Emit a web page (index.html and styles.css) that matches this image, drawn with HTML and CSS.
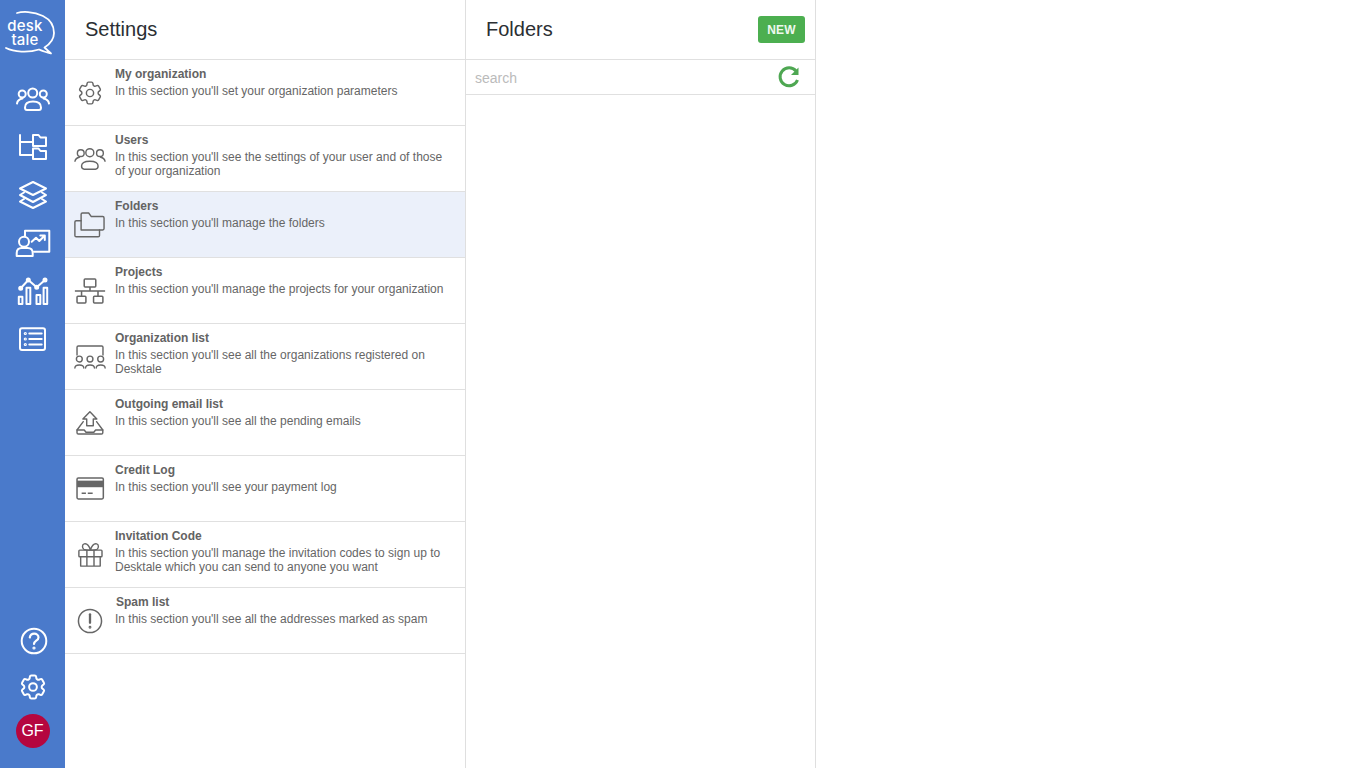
FILE: index.html
```html
<!DOCTYPE html>
<html lang="en">
<head>
<meta charset="utf-8">
<title>Settings</title>
<link rel="stylesheet" href="styles.css">
</head>
<body>
<div class="app">
  <nav class="sidebar">
    <div class="logo">
      <svg class="logo-bubble" width="65" height="60" viewBox="0 0 65 60" fill="none" stroke="#fff" stroke-width="1.800" stroke-linecap="round" stroke-linejoin="round"><path d="M17 13C22 11.500 33 11 43 16C51 20 54 27 54 33C54 39 50 44 44.500 47.500L51 53.500C46 52 42 51 39 49.500C28 53 14 52 6 48"/></svg>
      <span class="logo-text">desk<br>tale</span>
    </div>
    <div class="nav-top">
      <svg class="nav-icon" width="36" height="36" viewBox="0 0 36 36" fill="none" stroke="#fff" stroke-width="2" stroke-linecap="round" stroke-linejoin="round"><circle cx="17.700" cy="13" r="4.500"/><circle cx="7.200" cy="14" r="3.500"/><circle cx="28.300" cy="14" r="3.500"/><path d="M10 27.500c0-4 3-6 8-6s8 2 8 6c0 1.500-.7 2.500-2 2.500H12c-1.300 0-2-1-2-2.500z"/><path d="M2 23.500c.5-3 2.500-4.500 5.500-5M34 23.500c-.5-3-2.500-4.500-5.500-5"/></svg>
      <svg class="nav-icon" width="36" height="36" viewBox="0 0 36 36" fill="none" stroke="#fff" stroke-width="2" stroke-linecap="round" stroke-linejoin="round"><path d="M5 7v20h13M5 14h13"/><path d="M18 18V7h5.500l2 2.500H31V18z"/><path d="M18 31V20.500h5.500l2 2.500H31V31z"/></svg>
      <svg class="nav-icon" width="36" height="36" viewBox="0 0 36 36" fill="none" stroke="#fff" stroke-width="2" stroke-linecap="round" stroke-linejoin="round"><path d="M18 6 31 12.500 18 19 5 12.500z"/><path d="M9 16.500 5 19 18 26 31 19 27 16.500"/><path d="M9 23 5 25.500 18 32 31 25.500 27 23"/></svg>
      <svg class="nav-icon" width="36" height="36" viewBox="0 0 36 36" fill="none" stroke="#fff" stroke-width="2" stroke-linecap="round" stroke-linejoin="round"><path d="M10 12V6.700h24.300v21H19"/><circle cx="9" cy="17.700" r="5"/><path d="M1.700 32v-3c0-3 2-5 5-5h6c3 0 5 2 5 5v3z"/><path d="M16.700 17.700 21 13.700 24.300 17 29.300 12M25.300 11.500h4.500V16"/></svg>
      <svg class="nav-icon" width="36" height="36" viewBox="0 0 36 36" fill="none" stroke="#fff" stroke-width="2" stroke-linecap="round" stroke-linejoin="round"><rect x="3.800" y="24.700" width="3.600" height="7.300"/><rect x="11.500" y="15.700" width="3.800" height="16.300"/><rect x="21.500" y="23" width="3.800" height="9"/><rect x="28.600" y="15.700" width="3.600" height="16.300"/><path d="M5.700 16.300 13.300 8 21.700 15.300 30 8"/><circle cx="5.700" cy="16.300" r="1.500"/><circle cx="13.300" cy="8" r="1.500"/><circle cx="21.700" cy="15.300" r="1.500"/><circle cx="30" cy="8" r="1.500"/></svg>
      <svg class="nav-icon" width="36" height="36" viewBox="0 0 36 36" fill="none" stroke="#fff" stroke-width="2" stroke-linecap="round" stroke-linejoin="round"><rect x="5" y="8.300" width="25" height="21.700" rx="2"/><path d="M14.300 13.500h12.400M14.300 19h12.400M14.300 24.500h12.400"/><circle cx="10.300" cy="13.500" r=".6"/><circle cx="10.300" cy="19" r=".6"/><circle cx="10.300" cy="24.500" r=".6"/></svg>
    </div>
    <div class="nav-bottom">
      <svg class="help-icon" width="36" height="36" viewBox="0 0 36 36" fill="none" stroke="#fff" stroke-width="2" stroke-linecap="round" stroke-linejoin="round"><circle cx="18" cy="18" r="12.300"/><path d="M13.800 14.500c.4-2.500 2.200-3.800 4.400-3.800 2.500 0 4.300 1.600 4.300 3.700 0 3.300-4.500 3.300-4.500 6.600" stroke-width="2.200"/><circle cx="18" cy="25" r=".6"/></svg>
      <svg class="gear-icon" width="36" height="36" viewBox="-1.950 -1.950 27.900 27.900" fill="none" stroke="#fff" stroke-width="1.550" stroke-linecap="round" stroke-linejoin="round"><path d="M9.594 3.940c.09-.542.56-.94 1.110-.94h2.593c.55 0 1.020.398 1.110.94l.213 1.281c.063.374.313.686.645.87.074.04.147.083.22.127.325.196.72.257 1.075.124l1.217-.456a1.125 1.125 0 011.370.49l1.296 2.247a1.125 1.125 0 01-.26 1.431l-1.003.827c-.293.241-.438.613-.43.992a7.723 7.723 0 010 .255c-.008.378.137.75.43.991l1.004.827c.424.35.534.955.26 1.430l-1.298 2.247a1.125 1.125 0 01-1.369.491l-1.217-.456c-.355-.133-.75-.072-1.076.124a6.570 6.570 0 01-.22.128c-.331.183-.581.495-.644.869l-.213 1.280c-.09.543-.56.941-1.110.941h-2.594c-.55 0-1.020-.398-1.110-.94l-.213-1.281c-.062-.374-.312-.686-.644-.87a6.520 6.520 0 01-.22-.127c-.325-.196-.72-.257-1.076-.124l-1.217.456a1.125 1.125 0 01-1.369-.49l-1.297-2.247a1.125 1.125 0 01.26-1.431l1.004-.827c.292-.24.437-.613.43-.992a6.932 6.932 0 010-.255c.007-.378-.138-.75-.43-.992l-1.004-.827a1.125 1.125 0 01-.26-1.430l1.297-2.247a1.125 1.125 0 011.370-.491l1.216.456c.356.133.751.072 1.076-.124.072-.044.146-.087.22-.128.332-.183.582-.495.644-.869l.214-1.281z"/><circle cx="12" cy="12" r="3"/></svg>
      <div class="avatar">GF</div>
    </div>
  </nav>

  <section class="settings">
    <header class="col-head"><h1>Settings</h1></header>
    <ul class="menu">
      <li class="row">
        <svg class="row-icon" width="32" height="32" viewBox="-1.250 -1.250 26.500 26.500" fill="none" stroke="#666" stroke-width="1.200" stroke-linecap="round" stroke-linejoin="round"><path d="M9.594 3.940c.09-.542.56-.94 1.110-.94h2.593c.55 0 1.020.398 1.110.94l.213 1.281c.063.374.313.686.645.87.074.04.147.083.22.127.325.196.72.257 1.075.124l1.217-.456a1.125 1.125 0 011.370.49l1.296 2.247a1.125 1.125 0 01-.26 1.431l-1.003.827c-.293.241-.438.613-.43.992a7.723 7.723 0 010 .255c-.008.378.137.75.43.991l1.004.827c.424.35.534.955.26 1.430l-1.298 2.247a1.125 1.125 0 01-1.369.491l-1.217-.456c-.355-.133-.75-.072-1.076.124a6.570 6.570 0 01-.22.128c-.331.183-.581.495-.644.869l-.213 1.280c-.09.543-.56.941-1.110.941h-2.594c-.55 0-1.020-.398-1.110-.94l-.213-1.281c-.062-.374-.312-.686-.644-.87a6.520 6.520 0 01-.22-.127c-.325-.196-.72-.257-1.076-.124l-1.217.456a1.125 1.125 0 01-1.369-.49l-1.297-2.247a1.125 1.125 0 01.26-1.431l1.004-.827c.292-.24.437-.613.43-.992a6.932 6.932 0 010-.255c.007-.378-.138-.75-.43-.992l-1.004-.827a1.125 1.125 0 01-.26-1.430l1.297-2.247a1.125 1.125 0 011.370-.491l1.216.456c.356.133.751.072 1.076-.124.072-.044.146-.087.22-.128.332-.183.582-.495.644-.869l.214-1.281z"/><circle cx="12" cy="12" r="3"/></svg>
        <div class="row-text"><h2>My organization</h2><p>In this section you'll set your organization parameters</p></div>
      </li>
      <li class="row">
        <svg class="row-icon" width="32" height="32" viewBox="0 0 36 36" fill="none" stroke="#666" stroke-width="1.600" stroke-linecap="round" stroke-linejoin="round"><circle cx="17.800" cy="10.900" r="4.500"/><circle cx="7.600" cy="11.400" r="3.800"/><circle cx="29.200" cy="11.400" r="3.800"/><path d="M8.500 26c0-3.500 3-5.500 9.300-5.500s9.300 2 9.300 5.500c0 2-1 3.500-3 3.500H11.500c-2 0-3-1.500-3-3.500z"/><path d="M1.100 20.500c.5-2.500 2-4 5-4.500M34.900 20.500c-.5-2.500-2-4-5-4.500"/></svg>
        <div class="row-text"><h2>Users</h2><p>In this section you'll see the settings of your user and of those of your organization</p></div>
      </li>
      <li class="row active">
        <svg class="row-icon" width="32" height="32" viewBox="0 0 36 36" fill="none" stroke="#666" stroke-width="1.600" stroke-linecap="round" stroke-linejoin="round"><path d="M8 23.600V6c0-1 .5-1.500 1.500-1.500h7l3 4h12.800c1 0 1.500.5 1.500 1.500v12c0 1-.5 1.600-1.500 1.600z"/><path d="M8 13.200H2.500c-1 0-1.500.5-1.500 1.500v15c0 1 .5 1.500 1.500 1.500h24.700c1 0 1.500-.5 1.500-1.500v-6.100"/></svg>
        <div class="row-text"><h2>Folders</h2><p>In this section you'll manage the folders</p></div>
      </li>
      <li class="row">
        <svg class="row-icon" width="32" height="32" viewBox="0 0 36 36" fill="none" stroke="#666" stroke-width="1.700" stroke-linejoin="round"><rect x="11.500" y="4.500" width="13" height="9" rx="1"/><path d="M18 13.500V18M1 18h34M8.500 18v6M27 18v6"/><rect x="3.400" y="24" width="10" height="7.500" rx="1"/><rect x="22" y="24" width="10.500" height="7.500" rx="1"/></svg>
        <div class="row-text"><h2>Projects</h2><p>In this section you'll manage the projects for your organization</p></div>
      </li>
      <li class="row">
        <svg class="row-icon" width="32" height="32" viewBox="0 0 36 36" fill="none" stroke="#666" stroke-width="1.600" stroke-linecap="round" stroke-linejoin="round"><path d="M3.400 15.700V7c0-1 .5-1.400 1.500-1.400h26.200c1 0 1.500.4 1.500 1.400v8.700"/><circle cx="6" cy="20.300" r="3.300"/><circle cx="18" cy="20.300" r="3.300"/><circle cx="30" cy="20.300" r="3.300"/><path d="M1 30.500c0-2.500 2-3.500 5-3.500s5 1 5 3.500M13 30.500c0-2.500 2-3.500 5-3.500s5 1 5 3.500M25 30.500c0-2.500 2-3.500 5-3.500s5 1 5 3.500"/></svg>
        <div class="row-text"><h2>Organization list</h2><p>In this section you'll see all the organizations registered on Desktale</p></div>
      </li>
      <li class="row">
        <svg class="row-icon" width="32" height="32" viewBox="0 0 36 36" fill="none" stroke="#666" stroke-width="1.600" stroke-linecap="round" stroke-linejoin="round"><path d="M17.900 5.300 10 13.500h4.300V21h7.400v-7.500h4z"/><path d="M10.400 16.500 3.400 25.900v3c0 1 .5 1.500 1.500 1.500h26c1 0 1.500-.5 1.500-1.500v-3l-7-9.400"/><path d="M3.400 25.900H11.500l2 2.500h8.800l2-2.500h8.100"/></svg>
        <div class="row-text"><h2>Outgoing email list</h2><p>In this section you'll see all the pending emails</p></div>
      </li>
      <li class="row">
        <svg class="row-icon" width="32" height="32" viewBox="0 0 36 36" fill="none" stroke="#666" stroke-width="1.700" stroke-linejoin="round"><rect x="3.400" y="5.600" width="29.600" height="23.600" rx="1.500"/><rect x="3.400" y="8.600" width="29.600" height="7.400" fill="#666" stroke="none"/><path d="M8.600 22.800h4.800M15.500 22.800H21" stroke-width="1.500"/></svg>
        <div class="row-text"><h2>Credit Log</h2><p>In this section you'll see your payment log</p></div>
      </li>
      <li class="row">
        <svg class="row-icon" width="32" height="32" viewBox="0 0 36 36" fill="none" stroke="#666" stroke-width="1.600" stroke-linejoin="round"><rect x="5.500" y="12.500" width="26" height="7.500" rx="1"/><path d="M7.500 20v10.500h22V20M14.500 12.500v18M22.500 12.500v18"/><path d="M18.500 12.500c-1.500-5-4.500-7.500-7-7-2.500.5-2.500 4.500-.5 6 1 .7 2.500 1 7.500 1zM18.500 12.500c1.500-5 4.500-7.500 7-7 2.500.5 2.500 4.500.5 6-1 .7-2.500 1-7.500 1z"/></svg>
        <div class="row-text"><h2>Invitation Code</h2><p>In this section you'll manage the invitation codes to sign up to Desktale which you can send to anyone you want</p></div>
      </li>
      <li class="row">
        <svg class="row-icon" width="32" height="32" viewBox="0 0 36 36" fill="none" stroke="#666" stroke-width="1.700" stroke-linecap="round"><circle cx="18" cy="18" r="13"/><path d="M18 10.500v9.500" stroke-width="2.600"/><circle cx="18" cy="25" r=".6" stroke-width="2"/></svg>
        <div class="row-text"><h2 class="spam">Spam list</h2><p>In this section you'll see all the addresses marked as spam</p></div>
      </li>
    </ul>
  </section>

  <section class="folders">
    <header class="col-head folders-head">
      <h1>Folders</h1>
      <button class="btn-new">NEW</button>
    </header>
    <div class="search">
      <span class="search-text">search</span>
      <svg width="24" height="24" viewBox="0 0 24 24" fill="none" stroke="#4ea752" stroke-width="3"><path d="M20.500 15a9 9 0 1 1-1.500-9"/><path d="M21.500 2.500v7.500H14z" fill="#4ea752" stroke="none"/></svg>
    </div>
  </section>
</div>
</body>
</html>
```

FILE: styles.css
```css
* {
  box-sizing: border-box;
}

html,
body {
  margin: 0;
  height: 100%;
  background: #fff;
  overflow: hidden;
}

body {
  font-family: "Liberation Sans", Arial, sans-serif;
  color: #666;
}

.app {
  display: flex;
  height: 768px;
}

.sidebar {
  width: 65px;
  flex: none;
  background: #4a7acb;
  display: flex;
  flex-direction: column;
  align-items: center;
}

.logo {
  position: relative;
  width: 65px;
  height: 80px;
  flex: none;
}

.logo-bubble {
  position: absolute;
  left: 0;
  top: 0;
}

.logo-text {
  position: absolute;
  left: 5px;
  top: 19px;
  width: 40px;
  text-align: center;
  color: #fff;
  font-family: Inter, sans-serif;
  font-size: 15px;
  font-weight: 500;
  line-height: 14px;
  letter-spacing: 0.2px;
}

.nav-top {
  display: flex;
  flex-direction: column;
  gap: 12px;
  padding-left: 1px;
}

.nav-icon {
  display: block;
}

.nav-bottom {
  margin-top: auto;
  padding: 0 0 20px 1px;
  display: flex;
  flex-direction: column;
  align-items: center;
  gap: 10px;
}

.help-icon {
  display: block;
  margin-left: 2px;
}

.gear-icon {
  display: block;
}

.avatar {
  width: 34px;
  height: 34px;
  margin-top: -1px;
  margin-right: 1px;
  border-radius: 50%;
  background: #b5063f;
  color: #fff;
  font-size: 16px;
  line-height: 34px;
  text-align: center;
}

.settings {
  width: 401px;
  flex: none;
  border-right: 1px solid #dfdfdf;
}

.folders {
  width: 350px;
  flex: none;
  border-right: 1px solid #dfdfdf;
}

.col-head {
  height: 60px;
  padding-left: 20px;
  display: flex;
  align-items: center;
  border-bottom: 1px solid #e0e0e0;
}

.col-head h1 {
  margin: 0;
  font-size: 20px;
  font-weight: 400;
  color: #2b2f33;
}

.folders-head {
  justify-content: space-between;
  padding-right: 10px;
}

.btn-new {
  width: 47px;
  height: 27px;
  padding: 0;
  border: 0;
  border-radius: 3px;
  background: #4caf50;
  color: #eef8ee;
  font: bold 12px "Liberation Sans", Arial, sans-serif;
  letter-spacing: 0.2px;
}

.search {
  height: 35px;
  padding: 0 14px 0 9px;
  display: flex;
  align-items: center;
  justify-content: space-between;
  border-bottom: 1px solid #e0e0e0;
}

.search-text {
  padding-top: 2px;
  font-size: 14px;
  color: #bbb;
}

.menu {
  list-style: none;
  margin: 0;
  padding: 0;
}

.row {
  height: 66px;
  display: flex;
  padding: 7px 10px 0 9px;
  border-bottom: 1px solid #e0e0e0;
}

.row.active {
  background: #ebf0fa;
}

.row-icon {
  flex: none;
  margin-top: 10px;
  margin-right: 9px;
}

.row-text h2 {
  margin: 0;
  font-size: 12px;
  line-height: 14px;
  font-weight: 700;
  color: #636363;
}

.row-text h2.spam {
  padding-left: 1px;
}

.row-text p {
  margin: 3px 0 0;
  font-size: 12px;
  line-height: 14px;
  color: #666;
}
```
